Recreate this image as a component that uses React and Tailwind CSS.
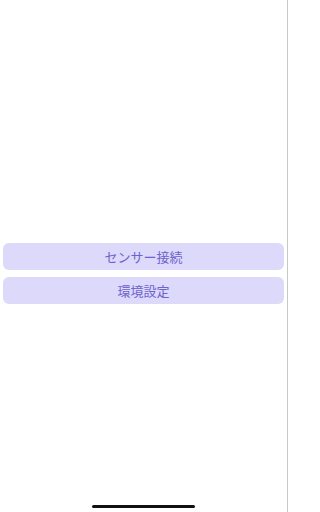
import React from 'react'

const FONT = { fontFamily: '"Noto Sans CJK JP", "Noto Sans", sans-serif' }

function MenuButton({ label }) {
  return (
    <button
      className="w-full h-[27px] rounded-md bg-[#dcd9fa] text-[13px] text-[#6e62cc] flex items-center justify-center"
      style={FONT}
    >
      {label}
    </button>
  )
}

export default function App() {
  return (
    <div className="w-[288px] h-[512px] bg-white flex">
      <div className="flex-1 flex flex-col">
        {/* Menu */}
        <div className="flex flex-col gap-[7px] pl-[3px] pr-[3px] pt-[243px]">
          <MenuButton label="センサー接続" />
          <MenuButton label="環境設定" />
        </div>
        <div className="flex-1" />
        {/* Home indicator */}
        <div className="flex justify-center pb-[4px]">
          <div className="w-[103px] h-[3px] rounded-full bg-[#111]" />
        </div>
      </div>
      <div className="w-px bg-[#c8c8c8]" />
    </div>
  )
}
